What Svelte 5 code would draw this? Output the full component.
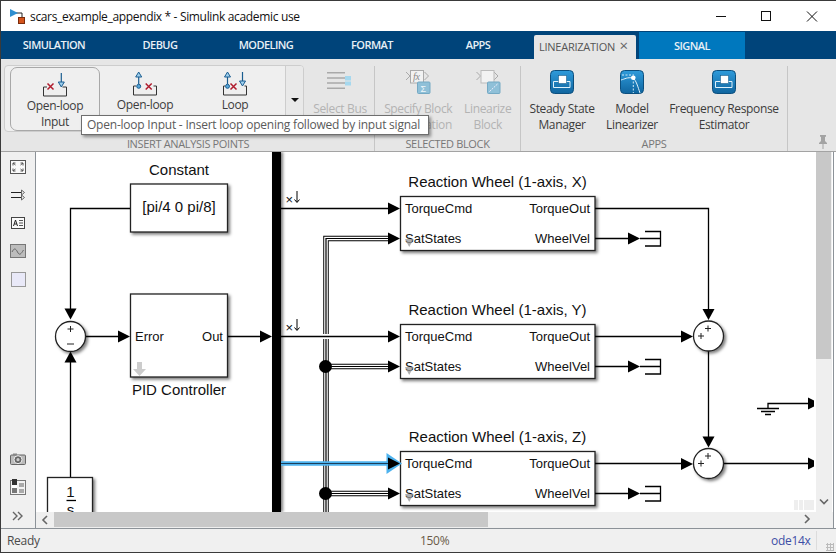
<script>
  // Tabs across the top
  const tabs = ["SIMULATION", "DEBUG", "MODELING", "FORMAT", "APPS"];

  // Diagram data, all in screen pixels
  const wheels = [
    { axis: "X", top: 196 },
    { axis: "Y", top: 324 },
    { axis: "Z", top: 451 }
  ];

  const right = (x, y) => `${x - 12},${y - 6} ${x},${y} ${x - 12},${y + 6}`;
  const down = (x, y) => `${x - 6},${y - 11} ${x},${y} ${x + 6},${y - 11}`;
  const up = (x, y) => `${x - 6},${y + 11} ${x},${y} ${x + 6},${y + 11}`;

  const sums = [
    { x: 708, y: 336 },
    { x: 708, y: 463.5 }
  ];
</script>

<div class="window">
  <header class="title">
    <svg class="app-icon" width="18" height="18" viewBox="9 6 18 18">
      <path d="M16 12h6v5" fill="none" stroke="#222" stroke-width="1" />
      <polygon points="10,8 18,12 10,16" fill="#2f8fd0" />
      <rect x="18.5" y="16.5" width="6" height="6" fill="#d4541c" stroke="#7a2c0c" />
    </svg>
    <span class="title-text">scars_example_appendix * - Simulink academic use</span>
    <div class="controls">
      <svg width="120" height="30" viewBox="716 0 120 30">
        <path d="M716 15.5h10" stroke="#111" fill="none" />
        <rect x="761.5" y="10.5" width="9" height="9" stroke="#111" fill="none" />
        <path d="M807 10.5l10 10M817 10.5l-10 10" stroke="#111" fill="none" />
      </svg>
    </div>
  </header>

  <nav class="tabs">
    {#each tabs as tab}
      <div class="tab">{tab}</div>
    {/each}
    <div class="tab-active">LINEARIZATION <span class="tab-x">×</span></div>
    <div class="tab-signal">SIGNAL</div>
  </nav>

  <section class="ribbon">
    <div class="group first">
      <div class="tools">
        <div class="gallery">
          <div class="gbtn selected">
            <svg width="88" height="28" viewBox="11 68 88 28">
              <path d="M47 86h-3.500v9h23v-9h-4" class="bracket" />
              <path d="M47.500 82.500l6 6M53.500 82.500l-6 6" class="red" />
              <path d="M61.300 72v9" class="navy" />
              <polygon points="58.300,81 64.300,81 61.300,86" class="hollow" />
            </svg>
            <span>Open-loop<br />Input</span>
          </div>
          <div class="gbtn">
            <svg width="88" height="28" viewBox="101 68 88 28">
              <path d="M136 86h-2.500v9h23v-9h-3" class="bracket" />
              <path d="M145.700 83.500l6 6M151.700 83.500l-6 6" class="red" />
              <path d="M138.700 77v7" class="navy" />
              <polygon points="135.700,77 141.700,77 138.700,72" class="hollow" />
              <circle cx="138.700" cy="86.300" r="2" class="dot" />
            </svg>
            <span>Open-loop</span>
          </div>
          <div class="gbtn">
            <svg width="88" height="28" viewBox="191 68 88 28">
              <path d="M225 86h-1.500v9h23v-9h-2" class="bracket" />
              <path d="M230.500 83.500l6 6M236.500 83.500l-6 6" class="red" />
              <path d="M227.500 77v7" class="navy" />
              <polygon points="224.500,77 230.500,77 227.500,72" class="hollow" />
              <circle cx="227.500" cy="86.300" r="2" class="dot" />
              <path d="M242.500 72v9" class="navy" />
              <polygon points="239.500,81 245.500,81 242.500,86" class="hollow" />
            </svg>
            <span>Loop</span>
          </div>
          <div class="more"><i></i></div>
        </div>
        <div class="tool dim bus">
          <svg width="34" height="32" viewBox="323 68 34 32">
            <path d="M327 72.700h18M327 78h18M327 83h18M327 88.300h18" stroke="#a9a9a9" stroke-width="1.500" fill="none" />
            <rect x="345" y="76" width="6" height="4.500" fill="#a6d8ee" />
            <rect x="345" y="81.500" width="6" height="4" fill="#a6d8ee" />
          </svg>
          <span>Select Bus</span>
        </div>
      </div>
      <div class="caption">INSERT ANALYSIS POINTS</div>
    </div>
    <div class="sep"></div>

    <div class="group second">
      <div class="tools">
        <div class="tool dim spec">
          <svg width="34" height="32" viewBox="401 68 34 32">
            <path d="M406 72l4 4-4 4M424.500 72l4 4-4 4" stroke="#aaa" fill="none" />
            <rect x="410.500" y="70.500" width="13" height="12.500" fill="#f2f2f2" stroke="#aaa" />
            <text x="413" y="80" class="fx">fx</text>
            <rect x="417.500" y="82" width="12.500" height="11.500" rx="1" fill="#8fc0d8" stroke="#74a9c4" />
            <text x="420.500" y="91.500" class="sigma">Σ</text>
          </svg>
          <span>Specify Block<br />Linearization</span>
        </div>
        <div class="tool dim lin">
          <svg width="34" height="32" viewBox="472 68 34 32">
            <path d="M477.500 72l4 4-4 4M495 72l4 4-4 4" stroke="#aaa" fill="none" />
            <rect x="482" y="70.500" width="13" height="12.500" fill="#f2f2f2" stroke="#bbb" />
            <rect x="488.500" y="82" width="12.500" height="11.500" rx="1" fill="#8fc0d8" stroke="#74a9c4" />
            <path d="M490.500 91.500l8-7.500" stroke="#eef" stroke-dasharray="2 1" fill="none" />
          </svg>
          <span>Linearize<br />Block</span>
        </div>
      </div>
      <div class="caption">SELECTED BLOCK</div>
    </div>
    <div class="sep"></div>

    <div class="group third">
      <div class="tools">
        <div class="tool state">
          <svg width="34" height="32" viewBox="545 68 34 32">
            <defs>
              <linearGradient id="appfill" x1="0" y1="0" x2="0" y2="1">
                <stop offset="0" stop-color="#2f9bdb" />
                <stop offset="1" stop-color="#0f659f" />
              </linearGradient>
            </defs>
            <rect x="550.500" y="70.500" width="23" height="23" rx="4" class="app" />
            <path d="M553.500 81.500h16.500v6h-16.500z" fill="none" stroke="#dff1fb" />
            <rect x="558.500" y="75.500" width="8" height="8" fill="#fff" stroke="#0b4f7e" stroke-width=".5" />
          </svg>
          <span>Steady State<br />Manager</span>
        </div>
        <div class="tool model">
          <svg width="34" height="32" viewBox="616 68 34 32">
            <rect x="621.500" y="70.500" width="23" height="23" rx="4" class="app" />
            <path d="M622 80c4-1 6-3 12-2 3 2 5 9 7 15" fill="none" stroke="#dff1fb" />
            <path d="M623 75h12M634.300 78v15" stroke="#cde8f7" stroke-dasharray="2 1.500" fill="none" />
            <circle cx="634.300" cy="77.700" r="2.300" fill="#fff" />
          </svg>
          <span>Model<br />Linearizer</span>
        </div>
        <div class="tool freq">
          <svg width="34" height="32" viewBox="708 68 34 32">
            <rect x="713.500" y="70.500" width="23" height="23" rx="4" class="app" />
            <path d="M716.500 81.500h16.500v6h-16.500z" fill="none" stroke="#dff1fb" />
            <rect x="721.500" y="75.500" width="8" height="8" fill="#fff" stroke="#0b4f7e" stroke-width=".5" />
          </svg>
          <span>Frequency Response<br />Estimator</span>
        </div>
      </div>
      <div class="caption">APPS</div>
    </div>
    <div class="sep"></div>

    <div class="pin">
      <svg width="10" height="14" viewBox="0 0 10 14">
        <path d="M2 0h6v1.500l-1 .5v4l2 2v1H1V8l2-2V2l-1-.5zM4.500 9h1v5h-1z" fill="#a3a3a3" />
      </svg>
    </div>
  </section>

  <main class="editor">
    <aside class="palette">
      <div class="pal-top">
        <svg width="16" height="14" viewBox="0 0 16 14">
          <rect x=".5" y=".5" width="15" height="13" fill="#fafafa" stroke="#555" />
          <path d="M3 3l2.500 2M3 3h2.500M3 3v2.500M13 3l-2.500 2M13 3h-2.500M13 3v2.500M3 11l2.500-2M3 11h2.500M3 11V8.500M13 11l-2.500-2M13 11h-2.500M13 11V8.500" stroke="#555" fill="none" />
        </svg>
        <svg width="16" height="14" viewBox="0 0 16 14">
          <path d="M1 4.500h13M1 9.500h13" stroke="#222" fill="none" />
          <path d="M11.500 2l3 2.500-3 2.500zM11.500 7l3 2.500-3 2.500z" fill="#eee" stroke="#666" />
        </svg>
        <svg width="14" height="14" viewBox="0 -1 14 14">
          <rect x=".5" y=".5" width="13" height="11" fill="#fafafa" stroke="#444" />
          <path d="M2.500 9l2-6 2 6M3.300 7h2.400" stroke="#222" fill="none" />
          <path d="M8 3.500h4M8 6h4M8 8.500h4" stroke="#555" fill="none" />
        </svg>
        <svg width="16" height="14" viewBox="0 0 16 14">
          <rect x=".5" y=".5" width="15" height="13" fill="#bdbdbd" stroke="#777" />
          <path d="M2 8c2-4 3.500-4 5.500 0s3.500 2 6-2" stroke="#666" fill="none" />
        </svg>
        <div class="area"></div>
      </div>
      <div class="pal-bottom">
        <svg width="16" height="12" viewBox="0 0 16 12">
          <rect x=".5" y="2" width="15" height="9.500" rx="1" fill="#bbb" stroke="#666" />
          <rect x="3" y=".5" width="4" height="2" fill="#888" />
          <circle cx="8" cy="6.700" r="4" fill="#666" stroke="#eee" />
          <circle cx="8" cy="6.700" r="1.600" fill="#ccc" />
        </svg>
        <svg width="16" height="16" viewBox="0 0 16 16">
          <rect x=".5" y="1.500" width="15" height="14" fill="#f3f3f3" stroke="#777" />
          <rect x="2" y="0" width="5" height="6" fill="#333" />
          <rect x="2" y="6" width="5" height="3" fill="#fff" />
          <rect x="2" y="9" width="5" height="5" fill="#777" />
          <rect x="9" y="4" width="5" height="4" fill="#aaa" />
          <rect x="9" y="10" width="5" height="4" fill="#aaa" />
        </svg>
        <svg class="pal-more" width="12" height="10" viewBox="0 0 12 10">
          <path d="M1 1l4 4-4 4M6 1l4 4-4 4" stroke="#666" stroke-width="1.400" fill="none" />
        </svg>
      </div>
    </aside>

    <div class="stage">
      <div class="stage-row">
        <div class="canvas">
          <svg class="diagram" width="780" height="360" viewBox="36 152 780 360">
            <!-- Constant and PID -->
            <text x="179" y="175" class="label" text-anchor="middle">Constant</text>
            <rect x="130.500" y="184" width="97" height="48" class="block" />
            <text x="179" y="212" class="label" text-anchor="middle">[pi/4 0 pi/8]</text>
            <rect x="130.500" y="294" width="97" height="83" class="block" />
            <text x="135" y="341" class="port">Error</text>
            <text x="223" y="341" class="port" text-anchor="end">Out</text>
            <path d="M137 362h5v7h4l-6.500 7-6.500-7h4z" fill="#ccc" />
            <text x="179" y="395" class="label" text-anchor="middle">PID Controller</text>

            <path d="M130 208.500H70.500V310M70.500 362V477M85 336.500h34M228 336.500h34" class="wire" />
            <polygon points={down(70.500, 319.500)} />
            <polygon points={up(70.500, 351.500)} />
            <polygon points={right(130, 336.500)} />
            <polygon points={right(272, 336.500)} />

            <circle cx="70.500" cy="336.500" r="15" class="sum" />
            <path d="M67.500 329h6M70.500 326v6M67 344h7" class="mark" />

            <!-- Integrator -->
            <rect x="47.500" y="477.500" width="45" height="50" class="block" />
            <text x="70.500" y="497" class="label" text-anchor="middle">1</text>
            <path d="M66.500 500.500h9.500" class="wire" />
            <text x="70.500" y="515" class="label" text-anchor="middle">s</text>

            <!-- Bus bar -->
            <rect x="272" y="152" width="9" height="360" class="bar" />

            <!-- Triple bus wires -->
            <g class="triple">
              <path d="M326 512V238.500H390M326 366.500H390M326 493.500H390" class="t1" />
              <path d="M326 512V238.500H390M326 366.500H390M326 493.500H390" class="t2" />
              <path d="M326 512V238.500H390M326 366.500H390M326 493.500H390" class="t3" />
            </g>
            <rect x="321" y="334" width="10" height="5" fill="#fff" />
            <circle cx="325.500" cy="366.500" r="6.500" />
            <circle cx="325.500" cy="493.500" r="6.500" />

            {#each wheels as w, i}
              <text x="497.500" y={w.top - 9} class="label" text-anchor="middle">Reaction Wheel (1-axis, {w.axis})</text>
              <rect x="400.500" y={w.top + 0.500} width="194.500" height="54" class="block" />
              <text x="405" y={w.top + 17} class="port">TorqueCmd</text>
              <text x="405" y={w.top + 47} class="port">SatStates</text>
              <text x="590" y={w.top + 17} class="port" text-anchor="end">TorqueOut</text>
              <text x="590" y={w.top + 47} class="port" text-anchor="end">WheelVel</text>
              <polygon points="405,{w.top + 43} 413.500,{w.top + 43} 409.200,{w.top + 51}" class="ghost" />
              <polygon points={right(400, w.top + 42.500)} />
              <!-- terminator -->
              <path d="M595 {w.top + 42.500}h34M640 {w.top + 42.500}h21M645 {w.top + 35.500}h15.500v14.500H645" class="wire" />
              <polygon points={right(640, w.top + 42.500)} />
              {#if i < 2}
                <path d="M281 {w.top + 12.500}H389" class="wire" />
                <polygon points={right(400, w.top + 12.500)} />
                <text x="285.500" y={w.top + 8} class="cross">×</text>
                <path d="M297 {w.top - 5}v11M294.500 {w.top + 3.500}l2.500 3 2.500-3" class="thin" />
              {/if}
            {/each}

            <!-- Highlighted signal -->
            <path d="M281 463.500H389" class="glow" />
            <polygon points="386.500,453 402,463.500 386.500,474" class="glow-head" />
            <path d="M281 463.500H389" class="core" />
            <polygon points={right(400, 463.500)} />

            <!-- Sums on the right -->
            <path d="M595 208.500H708.500V310M595 336.500H682M595 463.500H682M708.500 351V437M723 463.500H809M768 408V403.500H809" class="wire" />
            <polygon points={down(708.500, 320)} />
            <polygon points={down(708.500, 447.500)} />
            {#each sums as s}
              <polygon points={right(693, s.y + 0.500)} />
              <circle cx={s.x + 0.500} cy={s.y} r="15" class="sum" />
              <path d="M{s.x - 3} {s.y - 7.500}h6M{s.x} {s.y - 10.500}v6M{s.x - 10} {s.y}h6M{s.x - 7} {s.y - 3}v6" class="mark" />
            {/each}
            <polygon points="808,397.500 814,400.500 814,406.500 808,409.500" />
            <polygon points="808,457.500 814,460.500 814,466.500 808,469.500" />
            <path d="M757 408.500h22M761 411.500h14M765 414.500h6" class="wire" />

            <!-- Ghost thumbnails in the corner -->
            <rect x="794" y="500" width="4" height="10" fill="#eee" />
            <rect x="799" y="500" width="4" height="10" fill="#eee" />
            <rect x="804" y="500" width="10" height="10" fill="#eee" />
          </svg>
        </div>
        <div class="vscroll">
          <div class="vthumb"></div>
          <svg class="arrow-down" width="10" height="8" viewBox="0 0 10 8">
            <path d="M1 1.500l4 4 4-4" stroke="#666" stroke-width="1.600" fill="none" />
          </svg>
        </div>
      </div>
      <div class="hscroll">
        <svg class="arrow-left" width="8" height="10" viewBox="0 0 8 10">
          <path d="M6 1L2 5l4 4" stroke="#666" stroke-width="1.600" fill="none" />
        </svg>
        <div class="hthumb"></div>
        <svg class="arrow-right" width="8" height="10" viewBox="0 0 8 10">
          <path d="M2 1l4 4-4 4" stroke="#666" stroke-width="1.600" fill="none" />
        </svg>
      </div>
    </div>
  </main>

  <footer class="status">
    <span class="ready">Ready</span>
    <span class="zoom">150%</span>
    <span class="solver">ode14x</span>
    <div class="grip"></div>
  </footer>

  <div class="tooltip">Open-loop Input - Insert loop opening followed by input signal</div>
</div>

<style>
  :global(body) {
    margin: 0;
    background: #fff;
  }

  .window {
    position: relative;
    width: 836px;
    height: 553px;
    box-sizing: border-box;
    border-top: 1px solid #3a3a3a;
    border-left: 1px solid #3a3a3a;
    border-bottom: 1px solid #3a3a3a;
    display: flex;
    flex-direction: column;
    overflow: hidden;
    font-family: "Open Sans", "Liberation Sans", sans-serif;
    font-size: 12px;
    color: #333;
  }

  /* Title bar */
  .title {
    height: 30px;
    flex: none;
    display: flex;
    align-items: center;
    background: #fff;
  }

  .app-icon {
    margin-left: 8px;
    margin-right: 3px;
  }

  .title-text {
    font-size: 12px;
    letter-spacing: -0.34px;
    color: #111;
  }

  .controls {
    margin-left: auto;
    display: flex;
  }

  /* Tabs */
  .tabs {
    height: 28px;
    flex: none;
    display: flex;
    background: #00447a;
    color: #e8f0f6;
    font-size: 11px;
    font-weight: 600;
    letter-spacing: -0.55px;
  }

  .tab {
    width: 106px;
    line-height: 28px;
    text-align: center;
  }

  .tab-active {
    width: 102px;
    margin: 4px 0 0 3px;
    padding-left: 5px;
    box-sizing: border-box;
    line-height: 23px;
    background: #e6e6e6;
    color: #555;
    font-weight: 400;
    letter-spacing: -0.25px;
    border-radius: 2px 2px 0 0;
    white-space: nowrap;
  }

  .tab-x {
    font-size: 15px;
    margin-left: 2px;
    color: #666;
    line-height: 14px;
  }

  .tab-signal {
    width: 106px;
    margin: 1px 0 0 3px;
    line-height: 27px;
    text-align: center;
    background: #0078be;
  }

  /* Ribbon */
  .ribbon {
    height: 93px;
    flex: none;
    box-sizing: border-box;
    display: flex;
    background: #e6e6e6;
    border-bottom: 1px solid #a3a3a3;
    letter-spacing: -0.35px;
  }

  .group {
    display: flex;
    flex-direction: column;
    height: 92px;
  }

  .first { width: 373px; }
  .second { width: 145px; }
  .third { width: 266px; }

  .tools {
    flex: 1;
    display: flex;
    position: relative;
  }

  .caption {
    height: 14px;
    line-height: 14px;
    text-align: center;
    color: #777;
    font-size: 11px;
  }

  .first .caption {
    width: 374px;
  }

  .sep {
    width: 1px;
    margin-top: 7px;
    background: #c6c6c6;
    flex: none;
  }

  .gallery {
    margin: 6px 0 0 3px;
    width: 300px;
    height: 67px;
    box-sizing: border-box;
    display: flex;
    padding: 1px 0 0 5px;
    background: #efefef;
    border: 1px solid #cdcdcd;
    border-radius: 4px;
  }

  .gbtn {
    width: 90px;
    height: 64px;
    box-sizing: border-box;
    display: flex;
    flex-direction: column;
    align-items: center;
    text-align: center;
    line-height: 16px;
    padding-top: 1px;
    color: #3c3c3c;
  }

  .gbtn svg {
    margin-bottom: 1px;
  }

  .selected {
    border: 1px solid #a8a8a8;
    border-radius: 7px;
  }

  .more {
    margin-left: auto;
    width: 17px;
    background: #e9e9e9;
    border-left: 1px solid #cdcdcd;
    border-radius: 0 3px 3px 0;
    margin-top: -1px;
    display: flex;
    justify-content: center;
  }

  .more i {
    margin-top: 32px;
    width: 0;
    height: 0;
    border-left: 4px solid transparent;
    border-right: 4px solid transparent;
    border-top: 4px solid #111;
  }

  .tool {
    display: flex;
    flex-direction: column;
    align-items: center;
    text-align: center;
    line-height: 16px;
    padding-top: 9px;
    white-space: nowrap;
    color: #3c3c3c;
  }

  .tool svg {
    margin-bottom: 1px;
  }

  .dim {
    color: #b3b3b3;
  }

  .bus { width: 68px; margin-left: 2px; }
  .spec { width: 76px; margin-left: 6px; }
  .lin { width: 66px; margin-left: 0; }
  .state { width: 72px; margin-left: 5px; }
  .model { width: 68px; margin-left: 0; }
  .freq { width: 116px; margin-left: 0; }

  .pin {
    flex: 1;
    display: flex;
    justify-content: flex-end;
    align-items: flex-end;
    padding: 0 8px 2px 0;
  }

  .bracket { fill: none; stroke: #333; stroke-width: 1; }
  .red { fill: none; stroke: #b01c2e; stroke-width: 1.500; }
  .navy { fill: none; stroke: #1a5d90; stroke-width: 1.200; }
  .hollow { fill: #9fd0ee; stroke: #1a5d90; stroke-width: 1; }
  .dot { fill: #5aa7d8; stroke: #1a5d90; stroke-width: 1; }
  .app { fill: url(#appfill); stroke: #0c4f7e; }

  .fx {
    font: italic 10px "Liberation Serif", serif;
    fill: #888;
  }

  .sigma {
    font: 9px "Liberation Sans", sans-serif;
    fill: #eef7fb;
  }

  /* Editor */
  .editor {
    height: 377px;
    flex: none;
    display: flex;
    border-bottom: 1px solid #8c9298;
    box-sizing: border-box;
    padding-right: 2px;
  }

  .palette {
    width: 35px;
    flex: none;
    box-sizing: border-box;
    background: #f0f0f0;
    border-right: 1px solid #8c9298;
    display: flex;
    flex-direction: column;
    justify-content: space-between;
    align-items: center;
    padding: 8px 0 7px;
  }

  .pal-top,
  .pal-bottom {
    display: flex;
    flex-direction: column;
    align-items: center;
  }

  .pal-top { gap: 14px; }
  .pal-bottom { gap: 14px; }

  .pal-more {
    margin-top: 2px;
  }

  .area {
    width: 13px;
    height: 13px;
    background: #e9e9f8;
    border: 1px solid #999;
  }

  .stage {
    flex: 1;
    display: flex;
    flex-direction: column;
    border-right: 1px solid #8c9298;
    min-width: 0;
  }

  .stage-row {
    height: 360px;
    display: flex;
  }

  .canvas {
    width: 780px;
    height: 360px;
    background: #fff;
    overflow: hidden;
  }

  .diagram {
    display: block;
  }

  .label {
    font: 15px "Liberation Sans", sans-serif;
    fill: #111;
  }

  .port {
    font: 13px "Liberation Sans", sans-serif;
    fill: #111;
  }

  .cross {
    font: 13px "Liberation Sans", sans-serif;
    fill: #111;
  }

  .block {
    fill: #fff;
    stroke: #222;
    stroke-width: 1.300;
    filter: drop-shadow(2px 2px 1.500px rgba(0, 0, 0, 0.5));
  }

  .bar {
    filter: drop-shadow(2px 0 1.500px rgba(0, 0, 0, 0.5));
  }

  .sum {
    fill: #fff;
    stroke: #222;
    stroke-width: 1.300;
    filter: drop-shadow(2px 2px 1.500px rgba(0, 0, 0, 0.5));
  }

  .wire {
    fill: none;
    stroke: #000;
    stroke-width: 1.300;
  }

  .thin {
    fill: none;
    stroke: #000;
    stroke-width: 1;
  }

  .mark {
    fill: none;
    stroke: #222;
    stroke-width: 1;
  }

  .triple path {
    fill: none;
  }

  .t1 { stroke: #000; stroke-width: 5.500; }
  .t2 { stroke: #fff; stroke-width: 3.600; }
  .t3 { stroke: #000; stroke-width: 1.200; }

  .ghost {
    fill: rgba(150, 150, 150, 0.75);
  }

  .glow {
    fill: none;
    stroke: #4db2ee;
    stroke-width: 4.500;
  }

  .core {
    fill: none;
    stroke: #123;
    stroke-width: 0.800;
  }

  .glow-head {
    fill: #4db2ee;
  }

  .vscroll {
    position: relative;
    width: 16px;
    background: #efefef;
  }

  .vthumb {
    height: 207px;
    width: 15px;
    background: #c8c8c8;
  }

  .arrow-down {
    position: absolute;
    left: 3px;
    bottom: 6px;
  }

  .hscroll {
    position: relative;
    height: 16px;
    background: #efefef;
    display: flex;
    padding-left: 18px;
  }

  .hthumb {
    width: 434px;
    height: 15px;
    background: #c8c8c8;
  }

  .arrow-left {
    position: absolute;
    left: 5px;
    top: 3px;
  }

  .arrow-right {
    position: absolute;
    left: 767px;
    top: 2px;
  }

  /* Status bar */
  .status {
    flex: 1;
    position: relative;
    display: flex;
    align-items: center;
    background: #f0f0f0;
    font-size: 12px;
    letter-spacing: -0.3px;
  }

  .ready {
    margin-left: 6px;
    color: #4a4a4a;
  }

  .zoom {
    position: absolute;
    left: 419px;
    color: #6a5a48;
  }

  .solver {
    position: absolute;
    left: 770px;
    color: #3d4ea6;
  }

  .grip {
    position: absolute;
    right: 2px;
    bottom: 1px;
    width: 8px;
    height: 8px;
    background: radial-gradient(circle, #bbb 1px, transparent 1.200px) 0 0 / 3px 3px;
  }

  .status::after {
    content: "";
    position: absolute;
    left: 815px;
    top: 2px;
    bottom: 2px;
    width: 1px;
    background: #dcdcdc;
  }

  /* Tooltip over the ribbon */
  .tooltip {
    position: absolute;
    left: 80px;
    top: 114px;
    width: 348px;
    height: 20px;
    box-sizing: border-box;
    line-height: 18px;
    padding-left: 5px;
    background: #fff;
    border: 1px solid #6e6e6e;
    box-shadow: 2px 2px 3px rgba(0, 0, 0, 0.4);
    color: #5a5a5a;
    font-size: 12px;
    letter-spacing: -0.22px;
    white-space: nowrap;
  }
</style>
